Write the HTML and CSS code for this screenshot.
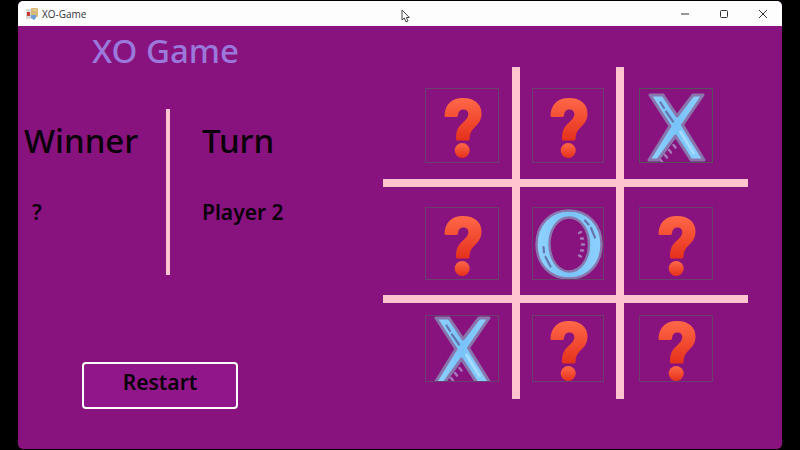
FILE: index.html
```html
<!DOCTYPE html>
<html lang="en">
<head>
<meta charset="utf-8">
<title>XO-Game</title>
<link rel="stylesheet" href="styles.css">
</head>
<body>
<svg class="defs" aria-hidden="true">
  <defs>
    <linearGradient id="red" x1="0" y1="0" x2="0" y2="1">
      <stop offset="0" stop-color="#ff6848"/><stop offset="1" stop-color="#e5301b"/>
    </linearGradient>
    <linearGradient id="blue" x1="0" y1="0" x2="1" y2="0">
      <stop offset="0" stop-color="#8fd2ff"/><stop offset=".5" stop-color="#79c3f8"/><stop offset="1" stop-color="#8dd0ff"/>
    </linearGradient>
    <symbol id="question" viewBox="0 0 74 74">
      <path fill="url(#red)" d="M21 28Q19.500 28 19.500 26.500C20 15 27 9 38 9C49.500 9 56.500 15 56.500 24.500C56.500 32.500 52 36 48.500 39.500C45.500 43 44.500 45.500 44.500 50Q44.500 51.500 43 51.500H32.500Q31 51.500 31 50C31 41.500 33 38 38 33.500C42 30 43.300 27.500 43.300 25C43.300 22 41.500 20.500 38.500 20.500C34.500 20.500 33.500 23 33 26.500Q32.800 28 31 28Z"/>
      <circle cx="37.200" cy="61.500" r="7.500" fill="url(#red)"/>
    </symbol>
    <symbol id="cross" viewBox="0 0 74 74">
      <path d="M11 6H24L38 27L54 6H64L43.500 36L65 71H52L36.500 47L19 71H10L31 37Z" fill="url(#blue)" stroke="#8976ad" stroke-width="3" stroke-linejoin="round"/>
      <path d="M21.500 13.500L25 19M27 22.500L34 32.500" fill="none" stroke="#6577ad" stroke-width="2.200" stroke-linecap="round"/>
      <path d="M41 42L55 65" fill="none" stroke="#a5dcff" stroke-width="3"/>
      <path d="M34.500 56L36.500 58.500M30 61L32 63.500M26 66L28 68.500M21.500 71L23.500 73.500" fill="none" stroke="#a57bbd" stroke-width="2.400" stroke-linecap="round"/>
    </symbol>
    <symbol id="nought" viewBox="0 0 74 74">
      <path fill-rule="evenodd" d="M38 3.500C57 3.500 70.500 18 70.500 37.500S57 71.500 38 71.500S5.500 57 5.500 37.500S19 3.500 38 3.500ZM38 10.500C27 10.500 18.500 22 18.500 37S27 64.500 38 64.500S58 53 58 37.500S49 10.500 38 10.500Z" fill="url(#blue)" stroke="#8976ad" stroke-width="2.400"/>
      <path d="M54 13.500L57.500 17.500M60 21L64 30.500M12.500 40L13 45.500M14.500 50L19.500 59.500" fill="none" stroke="#6577ad" stroke-width="2.200" stroke-linecap="round"/>
      <path d="M48 26L50 25M50 31.500H52M51 37.500H53M50 43.500H52M48 48.500L50 49.500" fill="none" stroke="#a57bbd" stroke-width="2.400" stroke-linecap="round"/>
    </symbol>
  </defs>
</svg>
<div class="window">
  <header class="titlebar">
    <svg class="app-icon" viewBox="0 0 12 12" aria-hidden="true">
      <rect x="0" y="1" width="5" height="10" fill="#d7d7d7"/>
      <rect x="5" y="0" width="7" height="9" rx="1" fill="#d8b878"/>
      <rect x="1" y="4" width="3" height="4" fill="#c73a32"/>
      <path d="M5 7h5v3l-2 2l-3-2z" fill="#6d9fd6"/>
      <path d="M7 2h4" stroke="#efdaa6"/>
    </svg>
    <span class="caption">XO-Game</span>
    <div class="controls">
      <button class="control" aria-label="Minimize"><svg viewBox="0 0 10 10"><path d="M1 5h8"/></svg></button>
      <button class="control" aria-label="Maximize"><svg viewBox="0 0 10 10"><rect x="1.500" y="1.500" width="7" height="7" rx="1"/></svg></button>
      <button class="control" aria-label="Close"><svg viewBox="0 0 10 10"><path d="M1 1l8 8M9 1l-8 8"/></svg></button>
    </div>
  </header>
  <main class="game">
    <section class="panel">
      <h1 class="title">XO Game</h1>
      <div class="status">
        <div class="winner"><h2 class="heading">Winner</h2><p class="value">?</p></div>
        <div class="divider"></div>
        <div class="turn"><h2 class="heading">Turn</h2><p class="value">Player 2</p></div>
      </div>
      <button class="restart">Restart</button>
    </section>
    <section class="board" aria-label="Board">
      <div class="line column-line first"></div>
      <div class="line column-line second"></div>
      <div class="line row-line first"></div>
      <div class="line row-line second"></div>
      <button class="tile left top" aria-label="Empty"><svg><use href="#question"/></svg></button>
      <button class="tile center top" aria-label="Empty"><svg><use href="#question"/></svg></button>
      <button class="tile right top focused" aria-label="X"><svg><use href="#cross"/></svg></button>
      <button class="tile left middle" aria-label="Empty"><svg><use href="#question"/></svg></button>
      <button class="tile center middle" aria-label="O"><svg><use href="#nought"/></svg></button>
      <button class="tile right middle" aria-label="Empty"><svg><use href="#question"/></svg></button>
      <button class="tile left bottom" aria-label="X"><svg><use href="#cross"/></svg></button>
      <button class="tile center bottom" aria-label="Empty"><svg><use href="#question"/></svg></button>
      <button class="tile right bottom" aria-label="Empty"><svg><use href="#question"/></svg></button>
    </section>
  </main>
</div>
<svg class="pointer" viewBox="0 0 9 14" aria-hidden="true"><path d="M1 1v10l2.300-2l1.700 4l2-1l-1.700-3.500h3z"/></svg>
</body>
</html>
```
FILE: styles.css
```css
* {
  box-sizing: border-box;
}

body {
  margin: 0;
  min-height: 100vh;
  padding: 1px 18px;
  display: flex;
  background: #000;
  color: #080008;
  font-family: "Noto Sans", "Open Sans", sans-serif;
}

h1, h2, p {
  margin: 0;
}

button {
  padding: 0;
  color: inherit;
  font-family: inherit;
}

.defs {
  position: absolute;
  width: 0;
  height: 0;
}

.window {
  flex: 1;
  display: flex;
  flex-direction: column;
  overflow: hidden;
  border-radius: 5px;
  background: #88137f;
}

.titlebar {
  display: flex;
  align-items: center;
  height: 25px;
  padding-left: 8px;
  background: #fdfdfd;
}

.app-icon {
  width: 12px;
  height: 12px;
  margin-right: 4px;
}

.caption {
  color: #333;
  font-family: "Open Sans", sans-serif;
  font-size: 10px;
  line-height: 14px;
}

.controls {
  display: flex;
  margin-left: auto;
}

.control {
  display: grid;
  place-items: center;
  width: 39px;
  height: 25px;
  border: 0;
  background: none;
}

.control svg {
  width: 10px;
  height: 10px;
  fill: none;
  stroke: #333;
}

.game {
  flex: 1;
  display: grid;
  grid-template-columns: 365fr 365fr 34fr;
  align-items: start;
}

.panel {
  display: flex;
  flex-direction: column;
  align-items: flex-start;
}

.title {
  margin: 2px 0 0 74px;
  color: #9a78dc;
  font-size: 33px;
  font-weight: 600;
  line-height: 46px;
}

.status {
  display: flex;
  margin-top: 35px;
}

.winner {
  width: 148px;
  padding: 9px 0 0 6px;
}

.winner .value {
  padding-left: 8px;
}

.divider {
  width: 4px;
  height: 166px;
  background: #ffc4cd;
}

.turn {
  padding: 9px 0 0 32px;
}

.heading {
  font-size: 33px;
  font-weight: 500;
  line-height: 46px;
}

.title {
  font-weight: 500;
}

.value {
  margin-top: 33px;
  font-size: 21px;
  font-weight: 600;
  line-height: 30px;
}

.restart {
  width: 156px;
  height: 47px;
  margin: 87px 0 0 64px;
  padding-bottom: 8px;
  border: 2px solid #fff;
  border-radius: 4px;
  background: #91168a;
  font-size: 21px;
  font-weight: 600;
  line-height: 30px;
}

.board {
  display: grid;
  grid-template-columns: 129fr 8px 96fr 8px 124fr;
  grid-template-rows: 112px 8px 108px 8px 96px;
  margin-top: 41px;
}

.line {
  background: #ffc4cd;
}

.column-line {
  grid-row: 1 / -1;
}

.column-line.first {
  grid-column: 2;
}

.column-line.second {
  grid-column: 4;
}

.row-line {
  grid-column: 1 / -1;
}

.row-line.first {
  grid-row: 2;
}

.row-line.second {
  grid-row: 4;
}

.tile {
  display: flex;
  align-items: center;
  justify-content: center;
  overflow: hidden;
  border: 1px solid #6b3e70;
  background: none;
}

.tile svg {
  flex: none;
  width: 74px;
  height: 74px;
}

.tile.left {
  grid-column: 1;
  margin: 0 13px 0 42px;
}

.tile.center {
  grid-column: 3;
  margin: 0 12px;
}

.tile.right {
  grid-column: 5;
  margin: 0 35px 0 15px;
}

.tile.top {
  grid-row: 1;
  height: 75px;
  margin-top: 21px;
}

.tile.middle {
  grid-row: 3;
  height: 73px;
  margin-top: 20px;
}

.tile.bottom {
  grid-row: 5;
  height: 67px;
  margin-top: 12px;
}

.tile.focused {
  border-color: #55505c;
}

.pointer {
  position: absolute;
  left: 401px;
  top: 9px;
  width: 9px;
  height: 14px;
  fill: #fff;
  stroke: #444;
}
```
